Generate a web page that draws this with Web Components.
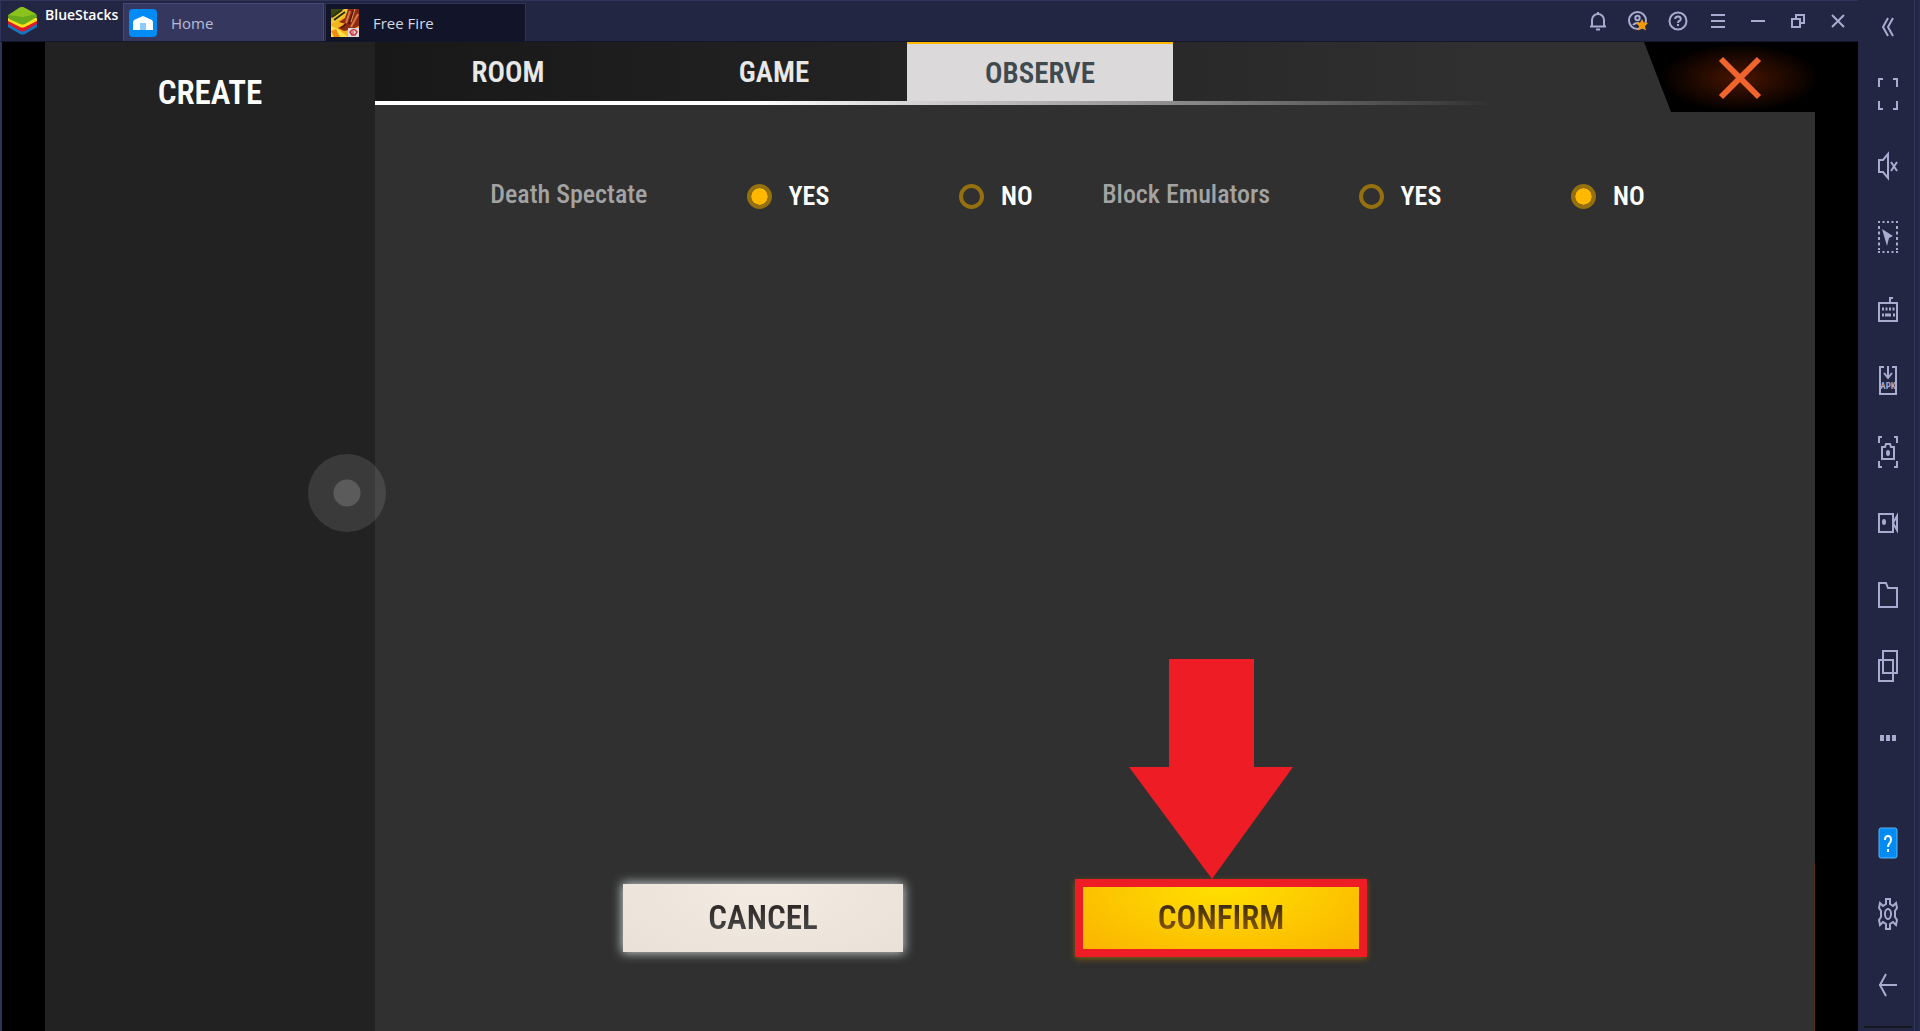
<!DOCTYPE html>
<html lang="en">
<head>
<meta charset="utf-8">
<title>BlueStacks</title>
<style>
    html, body {
        height: 100%;
        margin: 0;
    }

    body {
        background: #000;
        overflow: hidden;
    }
</style>
</head>
<body>
<emu-window>
    <title-bar slot="top">
        <app-tab slot="tabs" label="Home">
            <svg width="28" height="28" viewBox="0 0 28 28" aria-hidden="true">
                <rect width="28" height="28" rx="4" fill="#008bf5"/>
                <path d="M14 7 L5 11 Q4 12 4 14 V21 H24 V14 Q24 12 23 11 Z" fill="#fff"/>
                <rect x="11" y="14" width="6" height="7" fill="#8ccbfb"/>
            </svg>
        </app-tab>
        <app-tab slot="tabs" label="Free Fire" active>
            <svg width="28" height="28" viewBox="0 0 28 28" aria-hidden="true">
                <rect width="28" height="28" fill="#f5b51c"/>
                <path d="M0 0H13L0 9Z" fill="#3e4a16"/>
                <path d="M1 10L14 0H19L8 11L0 15Z" fill="#f3c93a"/>
                <path d="M1 8L11 1M3 11L14 3" stroke="#25300e" stroke-width="2"/>
                <path d="M17 0H28V17L22 20L13 22L7 19L15 15L8 13L14 9Z" fill="#8d2a16"/>
                <path d="M19 2L15 14M27 5L20 18" stroke="#d9793f" stroke-width="2"/>
                <path d="M23 1L18 15M15 15L10 19" stroke="#5a160c" stroke-width="2"/>
                <path d="M24 0L20 13" stroke="#e39a5c" stroke-width="1"/>
                <path d="M0 17L7 20L13 25L17 28H0Z" fill="#ffe14a"/>
                <path d="M0 22L5 20L9 28H3Z" fill="#f08c12"/>
                <rect x="17" y="19" width="11" height="9" fill="#dcdcdc"/>
                <path d="M19 23Q23 18 26 23L24 26H21Z" fill="none" stroke="#d32f3f" stroke-width="1.5"/>
                <path d="M22 22V26" stroke="#d32f3f"/>
            </svg>
        </app-tab>
    </title-bar>

    <room-settings slot="screen">
        <option-row slot="options" label="Death Spectate" name="spectate" value="yes"></option-row>
        <option-row slot="options" label="Block Emulators" name="emulators" value="no"></option-row>
        <game-button slot="actions">CANCEL</game-button>
        <game-button slot="actions" primary>CONFIRM</game-button>
    </room-settings>

    <side-bar slot="side"></side-bar>
</emu-window>

<script>
const GAME_FONT = `"Agency FB", "Roboto Condensed", "Liberation Sans Narrow", "Liberation Sans", sans-serif`;
const UI_FONT = `"Open Sans", "Noto Sans", sans-serif`;

const svg = (w, h, body) =>
    `<svg width="${w}" height="${h}" viewBox="0 0 ${w} ${h}" fill="none" stroke="currentColor" stroke-width="2" aria-hidden="true">${body}</svg>`;

const BUTTON_RESET = `
    button {
        display: flex;
        align-items: center;
        justify-content: center;
        margin: 0;
        padding: 0;
        border: 0;
        background: none;
        color: inherit;
        font: inherit;
        cursor: pointer;
    }
    svg { display: block; }
`;

// window frame: title bar and screen on the left, tools on the right
class EmuWindow extends HTMLElement {
    constructor() {
        super();
        this.attachShadow({ mode: "open" });
        this.shadowRoot.innerHTML = `
            <style>
                :host {
                    display: grid;
                    grid-template-columns: 1fr 62px;
                    grid-template-rows: 42px 1fr;
                    min-height: 100vh;
                    background: #232642;
                    font-family: ${UI_FONT};
                }
                .side {
                    grid-column: 2;
                    grid-row: 1 / 3;
                    display: grid;
                }
                .screen {
                    display: grid;
                    padding: 0 43px;
                    border-left: 2px solid #303459;
                    background: #000;
                }
            </style>
            <slot name="top"></slot>
            <div class="screen"><slot name="screen"></slot></div>
            <div class="side"><slot name="side"></slot></div>
        `;
    }
}

class TitleBar extends HTMLElement {
    constructor() {
        super();
        this.attachShadow({ mode: "open" });
        const icons = [
            ["Notifications", svg(18, 20, `<path d="M3 15V9a6 6 0 0 1 12 0v6M1 15.500H17M9 1V3"/><path d="M7 18.500H11"/>`)],
            ["Account", svg(20, 20, `<circle cx="9.500" cy="9.500" r="8.500"/><circle cx="9.500" cy="7" r="2.200"/><path d="M5 14Q7 11.500 11 12"/><path d="M14 8l1.800 3.600 4.200.5-3 2.900.9 4.500-3.900-2.200-3.900 2.200.9-4.500-3-2.900 4.200-.5z" fill="#f59b00" stroke="none"/>`)],
            ["Help", svg(20, 20, `<circle cx="10" cy="10" r="8.500"/><path d="M7.200 8Q7.200 5.500 10 5.500T12.800 8Q12.800 9.500 11 10.200Q10 10.700 10 12M10 13V15"/>`)],
            ["Menu", svg(14, 16, `<path d="M0 2H14M0 8H14M0 14H14"/>`)],
            ["Minimize", svg(14, 16, `<path d="M0 8H14"/>`)],
            ["Restore", svg(14, 14, `<rect x="1" y="5" width="8" height="8"/><path d="M5 5V1H13V9H9"/>`)],
            ["Close", svg(14, 14, `<path d="M1 1L13 13M13 1L1 13"/>`)],
        ];
        this.shadowRoot.innerHTML = `
            <style>
                ${BUTTON_RESET}
                :host {
                    display: flex;
                    box-sizing: border-box;
                    height: 42px;
                    padding-left: 7px;
                    border: solid #303459;
                    border-width: 1px 0 0 1px;
                    border-bottom: 1px solid #14162b;
                    background: #232642;
                    color: #a9acd0;
                }
                .brand {
                    display: flex;
                    gap: 8px;
                    width: 115px;
                    color: #fff;
                    font-size: 14px;
                    font-weight: 600;
                    line-height: 28px;
                    white-space: nowrap;
                }
                .brand svg { margin-top: 6px; }
                .tabs {
                    display: flex;
                    flex: 1;
                    align-items: flex-end;
                    gap: 1px;
                }
                .tools { display: flex; }
                .tools button { width: 40px; height: 40px; }
            </style>
            <div class="brand">
                <svg width="29" height="28" viewBox="0 0 29 28" aria-hidden="true">
                    <path d="M0 16L14 9L29 16V20L17 27Q14 28 12 27L0 20Z" fill="#1278c4"/>
                    <path d="M0 14L14 8L29 14V17L17 24Q14 25 12 24L0 17Z" fill="#d9182b"/>
                    <path d="M0 11L14 5L29 11V14L17 20Q14 21 12 20L0 14Z" fill="#ffe01a"/>
                    <path d="M0 8L11 1Q14 -1 17 1L28 7Q29 8 29 10L17 17Q14 18 12 17L1 12Q0 11 0 8Z" fill="#68aa1c"/>
                    <path d="M1 8L11 1Q14 -1 17 1L28 7L15 10Z" fill="#8cc21c"/>
                </svg>
                <span>BlueStacks</span>
            </div>
            <div class="tabs"><slot name="tabs"></slot></div>
            <div class="tools">
                ${icons.map(([name, icon]) => `<button aria-label="${name}">${icon}</button>`).join("")}
            </div>
        `;
    }
}

class AppTab extends HTMLElement {
    constructor() {
        super();
        this.attachShadow({ mode: "open" });
    }

    connectedCallback() {
        this.shadowRoot.innerHTML = `
            <style>
                ${BUTTON_RESET}
                :host { display: block; }
                button {
                    box-sizing: border-box;
                    justify-content: flex-start;
                    gap: 14px;
                    width: 201px;
                    height: 38px;
                    padding-left: 5px;
                    border: 1px solid #45487a;
                    border-bottom: 0;
                    background: #35375f;
                    color: #b9bbd6;
                    font-size: 15px;
                    line-height: 24px;
                }
                :host([active]) button {
                    border-color: #303459;
                    background: #121429;
                    color: #d6d7e4;
                }
            </style>
            <button><slot></slot><span>${this.getAttribute("label")}</span></button>
        `;
    }
}

// vertical strip of emulator tools
class SideBar extends HTMLElement {
    constructor() {
        super();
        this.attachShadow({ mode: "open" });
        const tools = [
            ["Full screen", svg(20, 32, `<path d="M1 9V1H5M15 1H19V9M1 23V31H5M15 31H19V23"/>`)],
            ["Volume", svg(20, 32, `<path d="M1 10H5L10 4V28L5 22H1Z"/><path d="M13 12L19 21M19 12L13 21"/>`)],
            ["Lock cursor", svg(20, 32, `<path d="M0 1H20M0 31H20" stroke-dasharray="2 2.500"/><path d="M1 5V29M19 5V29" stroke-dasharray="3 2.500"/><path d="M4 8L15 15L11 17L9 25Z" fill="currentColor" stroke="none"/>`)],
            ["Game controls", svg(20, 32, `<rect x="1" y="10" width="18" height="18"/><path d="M12 10V5H15"/><path d="M4 16H17" stroke-width="3" stroke-dasharray="2 1.500"/><path d="M4 22H6M7 22H13M15 22H17" stroke-width="3"/>`)],
            ["Install APK", svg(20, 32, `<path d="M6 3H2V30H18V3H14M10 2V14M6 9L10 14L14 9"/><text x="10" y="25" text-anchor="middle" font-family="Roboto Condensed" font-size="9" font-weight="700" fill="currentColor" stroke="none">APK</text>`)],
            ["Screenshot", svg(20, 32, `<path d="M1 7V1H4M16 1H19V7M1 25V31H4M16 31H19V25"/><path d="M4 11H7L8 8H12L13 11H16V23H4Z"/><ellipse cx="10" cy="17" rx="1" ry="2"/>`)],
            ["Record", svg(20, 32, `<rect x="1" y="7" width="14" height="18"/><path d="M15 16L19 9V23Z"/><ellipse cx="6" cy="15" rx="1" ry="2"/>`)],
            ["Media folder", svg(20, 32, `<path d="M1 4H8L10 9H19V28H1Z"/>`)],
            ["Multi-instance", svg(20, 32, `<rect x="5" y="1" width="14" height="22"/><rect x="1" y="10" width="14" height="21"/>`)],
            ["More", svg(20, 32, `<path d="M2 16H6M8 16H12M14 16H18" stroke-width="6"/>`)],
        ];
        const system = [
            ["Guide", svg(20, 32, `<rect x="1" y="1" width="18" height="30" rx="2" fill="#008bf5" stroke="#5bb5f8" stroke-width="1"/><path d="M7 13Q7 9 10 9T13 13Q13 15 11 17Q10 18 10 20M10 22V25" stroke="#fff"/>`)],
            ["Settings", svg(20, 32, `<path d="M8 1H12V6L15 8L18 5L19 10L17 13V19L19 22L18 27L15 24L12 26V31H8V26L5 24L2 27L1 22L3 19V13L1 10L2 5L5 8L8 6Z"/><ellipse cx="10" cy="16" rx="3" ry="5"/>`)],
            ["Back", svg(20, 32, `<path d="M1 16H19M8 5L2 16L8 27"/>`)],
        ];
        const list = (items) => items.map(([name, icon]) => `<button aria-label="${name}">${icon}</button>`).join("");
        this.shadowRoot.innerHTML = `
            <style>
                ${BUTTON_RESET}
                :host {
                    display: flex;
                    flex-direction: column;
                    align-items: center;
                    box-sizing: border-box;
                    padding: 17px 0 0;
                    border-right: 2px solid #262a49;
                    background: linear-gradient(#303459, #303459) right 3px top / 1px 100% no-repeat #232642;
                    color: #a9acd0;
                }
                .tools {
                    display: flex;
                    flex: 1;
                    flex-direction: column;
                    justify-content: space-between;
                    margin: 41px 0 73px;
                }
                .system {
                    display: flex;
                    flex-direction: column;
                    gap: 39px;
                }
                .edge {
                    width: 48px;
                    height: 2px;
                    margin: 25px 0 3px;
                    background: #15171f;
                }
            </style>
            <button aria-label="Collapse">${svg(14, 20, `<path d="M7 1L2 10L7 19M12 1L7 10L12 19"/>`)}</button>
            <div class="tools">${list(tools)}</div>
            <div class="system">${list(system)}</div>
            <div class="edge"></div>
        `;
    }
}

class RoomSettings extends HTMLElement {
    constructor() {
        super();
        this.attachShadow({ mode: "open" });
        this.shadowRoot.innerHTML = `
            <style>
                ${BUTTON_RESET}
                :host {
                    display: grid;
                    grid-template-columns: 11fr 48fr;
                    position: relative;
                    font-family: ${GAME_FONT};
                    font-weight: 600;
                }
                aside { background: #222; }
                h1 {
                    margin: 0;
                    padding-top: 27px;
                    color: #fff;
                    font-size: 33px;
                    font-weight: 600;
                    line-height: 48px;
                    text-align: center;
                }
                main {
                    display: flex;
                    flex-direction: column;
                    background: linear-gradient(transparent 83%, #5a2a1e 83%) right / 1px 100% no-repeat #303030;
                }
                header {
                    display: flex;
                    justify-content: space-between;
                    height: 70px;
                    background: linear-gradient(90deg, #181818, #303030 78%) top / 100% 59px no-repeat;
                }
                nav {
                    display: flex;
                    flex: 1;
                    height: 59px;
                    border-bottom: 4px solid;
                    border-image: linear-gradient(90deg, #fff 30%, #888 64%, #303030 88%) 1;
                }
                nav button {
                    flex: 0 1 266px;
                    color: #e8e8e8;
                    font-size: 29px;
                    line-height: 56px;
                }
                nav button[aria-selected="true"] {
                    border-top: 2px solid #ffb800;
                    background: #dbd9da;
                    color: #404a4e;
                }
                .close {
                    width: 171px;
                    height: 70px;
                    padding: 2px 0 0 21px;
                    background: radial-gradient(ellipse 80px 34px at 96px 36px, #4a1500, #000);
                    clip-path: polygon(0 0, 100% 0, 100% 100%, 27px 100%);
                }
                .options {
                    display: grid;
                    grid-template-columns: 1fr 1fr;
                    flex: 1;
                    align-items: start;
                    padding: 66px 7% 0 8%;
                }
                footer {
                    display: flex;
                    justify-content: center;
                    gap: 172px;
                    padding: 0 200px 74px 0;
                }
                /* floating touch handle, lies over both columns */
                .touch {
                    position: absolute;
                    top: 412px;
                    left: 263px;
                    width: 78px;
                    height: 78px;
                    border-radius: 50%;
                    background: radial-gradient(circle, rgba(255, 255, 255, .26) 13px, rgba(255, 255, 255, .11) 14px);
                }
            </style>
            <aside><h1>CREATE</h1></aside>
            <main>
                <header>
                    <nav role="tablist">
                        <button role="tab" aria-selected="false">ROOM</button>
                        <button role="tab" aria-selected="false">GAME</button>
                        <button role="tab" aria-selected="true">OBSERVE</button>
                    </nav>
                    <button class="close" aria-label="Close settings">
                        <svg width="44" height="44" viewBox="0 0 44 44" fill="none" stroke="#f0652e" stroke-width="6" aria-hidden="true">
                            <path d="M3 3L41 41M41 3L3 41"/>
                        </svg>
                    </button>
                </header>
                <div class="options"><slot name="options"></slot></div>
                <footer><slot name="actions"></slot></footer>
            </main>
            <div class="touch"></div>
        `;
    }
}

class OptionRow extends HTMLElement {
    constructor() {
        super();
        this.attachShadow({ mode: "open" });
    }

    connectedCallback() {
        const name = this.getAttribute("name");
        const value = this.getAttribute("value");
        const choice = (v) => `
            <label>
                <input type="radio" name="${name}" value="${v}" ${v === value ? "checked" : ""}>
                <span>${v.toUpperCase()}</span>
            </label>`;
        this.shadowRoot.innerHTML = `
            <style>
                :host { display: block; }
                fieldset {
                    display: grid;
                    grid-template-columns: 256fr 212fr 143fr;
                    min-width: 0;
                    margin: 0;
                    padding: 0;
                    border: 0;
                }
                .name {
                    color: #a3a3a3;
                    font-size: 26px;
                    font-weight: 500;
                    line-height: 32px;
                    white-space: nowrap;
                }
                label {
                    display: flex;
                    align-items: center;
                    gap: 17px;
                    color: #fff;
                    font-size: 26px;
                    line-height: 36px;
                }
                input {
                    appearance: none;
                    box-sizing: border-box;
                    width: 25px;
                    height: 25px;
                    margin: 0;
                    border: 4px solid #94700f;
                    border-radius: 50%;
                }
                input:checked { background: #ffb800 padding-box; }
            </style>
            <fieldset aria-labelledby="name">
                <span class="name" id="name">${this.getAttribute("label")}</span>
                ${choice("yes")}
                ${choice("no")}
            </fieldset>
        `;
    }
}

class GameButton extends HTMLElement {
    constructor() {
        super();
        this.attachShadow({ mode: "open" });
        this.shadowRoot.innerHTML = `
            <style>
                ${BUTTON_RESET}
                :host {
                    display: block;
                    position: relative;
                    align-self: center;
                }
                button {
                    width: 280px;
                    height: 68px;
                    background: radial-gradient(ellipse at 50% 0, #f4ebe2, #e9e0d7);
                    box-shadow: 0 0 10px 1px #c9cfd0;
                    font-size: 33px;
                    line-height: 48px;
                }
                span {
                    background: linear-gradient(#2c2624 20%, #4a4a4a 80%);
                    background-clip: text;
                    color: transparent;
                }
                .arrow { display: none; }
                :host([primary]) button {
                    box-sizing: border-box;
                    width: 292px;
                    height: 78px;
                    border: 8px solid #ee1c25;
                    background: radial-gradient(ellipse at 50% 0, #ffe000, #fab400) padding-box;
                    box-shadow: 0 2px 6px #7a5b12;
                }
                :host([primary]) span {
                    background-image: linear-gradient(#3c2a14 20%, #8a5a08 80%);
                }
                /* pointer above the highlighted button */
                :host([primary]) .arrow {
                    display: block;
                    position: absolute;
                    bottom: 100%;
                    left: 54px;
                }
            </style>
            <svg class="arrow" width="164" height="220" viewBox="0 0 164 220" aria-hidden="true">
                <path d="M40 0H125V108H164L83 220L0 108H40Z" fill="#ee1c25"/>
            </svg>
            <button><span><slot></slot></span></button>
        `;
    }
}

customElements.define("emu-window", EmuWindow);
customElements.define("title-bar", TitleBar);
customElements.define("app-tab", AppTab);
customElements.define("side-bar", SideBar);
customElements.define("room-settings", RoomSettings);
customElements.define("option-row", OptionRow);
customElements.define("game-button", GameButton);
</script>
</body>
</html>
